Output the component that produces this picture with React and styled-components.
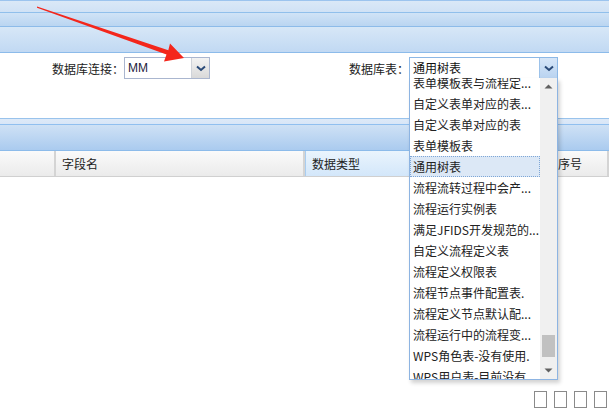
import React from 'react'
import styled, { createGlobalStyle } from 'styled-components'

const Global = createGlobalStyle`
  html, body { margin: 0; padding: 0; background: #fff; }
  body {
    font-family: "Microsoft YaHei", "Noto Sans CJK SC", "Liberation Sans", sans-serif;
    font-size: 12px;
    color: #1a1a1a;
  }
`;

const Page = styled.div`
  position: relative;
  width: 609px;
  height: 412px;
  overflow: hidden;
  display: flex;
  flex-direction: column;
  border-top: 1px solid #9cc4ee;
  box-sizing: border-box;
`;

const Band = styled.div`
  height: ${p => p.$h}px;
  flex: none;
  background: linear-gradient(to bottom, ${p => p.$from}, ${p => p.$to});
  border-bottom: 1px solid ${p => p.$line || '#8dbbe9'};
  border-top: ${p => (p.$top ? `1px solid ${p.$top}` : 'none')};
`;

const Form = styled.div`
  height: 65px;
  flex: none;
  display: flex;
  align-items: flex-start;
  padding: 4px 0 0 52px;
  box-sizing: border-box;
`;

const Field = styled.div`
  display: flex;
  align-items: center;
  margin-left: ${p => p.$gap || 0}px;
`;

const Label = styled.span`
  width: ${p => p.$w}px;
  white-space: nowrap;
  color: #222;
`;

const Combo = styled.div`
  position: relative;
  width: ${p => p.$w}px;
  height: 22px;
  box-sizing: border-box;
  display: flex;
  border: 1px solid ${p => (p.$active ? '#8cb8e6' : '#aab6cf')};
  background: #fff;
`;

const ComboText = styled.div`
  flex: 1;
  padding-left: 3px;
  line-height: 20px;
  font-family: ${p => (p.$latin ? '"Liberation Sans", sans-serif' : 'inherit')};
  color: ${p => (p.$latin ? '#1c1c3c' : '#111')};
`;

const ComboButton = styled.div`
  width: 17px;
  display: flex;
  align-items: center;
  justify-content: center;
  border-left: 1px solid ${p => (p.$active ? '#9cc2ea' : '#cfd3da')};
  background: ${p =>
    p.$active
      ? 'linear-gradient(to bottom, #d6e6f8, #b9d3f0)'
      : 'linear-gradient(to bottom, #f3f3f3, #d9d9d9)'};
`;

const List = styled.div`
  position: absolute;
  top: 100%;
  left: -1px;
  right: -1px;
  height: 302px;
  box-sizing: border-box;
  display: flex;
  background: #fff;
  border: 1px solid #8db4e2;
  border-top: none;
  box-shadow: 2px 3px 4px rgba(0, 0, 0, 0.18);
  z-index: 5;
`;

const Items = styled.div`
  flex: 1;
  overflow: hidden;
`;

const ItemsInner = styled.div`
  margin-top: -6px;
`;

const Item = styled.div`
  height: 21px;
  line-height: 19px;
  padding-left: 2px;
  white-space: nowrap;
  overflow: hidden;
  box-sizing: border-box;
  color: #222;
  background: ${p => (p.$selected ? '#dce8f6' : 'transparent')};
  border: 1px dotted ${p => (p.$selected ? '#7ea6d6' : 'transparent')};
`;

const Scroll = styled.div`
  width: 17px;
  display: flex;
  flex-direction: column;
  background: #f0f0f0;
`;

const ScrollArrow = styled.div`
  height: 17px;
  display: flex;
  align-items: center;
  justify-content: center;
`;

const Track = styled.div`
  flex: 1;
  position: relative;
`;

const Thumb = styled.div`
  position: absolute;
  left: 2px;
  width: 13px;
  height: 22px;
  background: #c1c1c1;
`;

const Header = styled.div`
  height: 26px;
  flex: none;
  display: flex;
  box-sizing: border-box;
  border-bottom: 1px solid #d0d0d0;
  background: linear-gradient(to bottom, #fafafa, #ebebeb);
`;

const HeadCell = styled.div`
  width: ${p => (p.$w ? `${p.$w}px` : 'auto')};
  flex: ${p => (p.$w ? 'none' : 1)};
  box-sizing: border-box;
  padding-left: ${p => p.$pad || 6}px;
  line-height: 25px;
  white-space: nowrap;
  border-right: 2px solid #d4d4d4;
  background: ${p => (p.$hot ? 'linear-gradient(to bottom, #eaf4fd, #d3e7fa)' : 'transparent')};
  border-left: ${p => (p.$hot ? '1px solid #a9cdf0' : 'none')};
  color: #222;
`;

const Body = styled.div`
  flex: 1;
  display: flex;
  align-items: flex-end;
  justify-content: flex-end;
  padding: 0 2px 4px 0;
`;

const Tofus = styled.div`
  display: flex;
  gap: 7px;
`;

const Tofu = styled.span`
  width: 13px;
  height: 17px;
  box-sizing: border-box;
  border: 1.5px solid #8a8a8a;
`;

const Overlay = styled.svg`
  position: absolute;
  left: 0;
  top: 0;
  pointer-events: none;
  z-index: 10;
`;

const Chevron = () => (
  <svg width="10" height="7" viewBox="0 0 10 7">
    <path d="M1 1.5 L5 5 L9 1.5" fill="none" stroke="#2a4a78" strokeWidth="2" />
  </svg>
);

const Tri = ({ up }) => (
  <svg width="9" height="5" viewBox="0 0 9 5">
    <path d={up ? 'M0.5 4.5 L4.5 0.5 L8.5 4.5 Z' : 'M0.5 0.5 L8.5 0.5 L4.5 4.5 Z'} fill="#606060" />
  </svg>
);

const tables = [
  '表单模板表与流程定...',
  '自定义表单对应的表...',
  '自定义表单对应的表',
  '表单模板表',
  '通用树表',
  '流程流转过程中会产...',
  '流程运行实例表',
  '满足JFIDS开发规范的...',
  '自定义流程定义表',
  '流程定义权限表',
  '流程节点事件配置表.',
  '流程定义节点默认配...',
  '流程运行中的流程变...',
  'WPS角色表-没有使用.',
  'WPS用户表-目前没有...',
];

export default function App() {
  return (
    <>
      <Global />
      <Page>
        <Band $h={11} $from="#dae8f7" $to="#d0e2f5" $line="#90bfeb" />
        <Band $h={13} $from="#d0e3f6" $to="#bad5f1" $line="#8dbbe9" />
        <Band $h={25} $from="#d7e7f7" $to="#c1d9f3" $line="#8cbbea" />
        <Form>
          <Field>
            <Label $w={72}>数据库连接：</Label>
            <Combo $w={86}>
              <ComboText $latin>MM</ComboText>
              <ComboButton><Chevron /></ComboButton>
            </Combo>
          </Field>
          <Field $gap={139}>
            <Label $w={60}>数据库表：</Label>
            <Combo $w={149} $active>
              <ComboText>通用树表</ComboText>
              <ComboButton $active><Chevron /></ComboButton>
              <List>
                <Items>
                  <ItemsInner>
                    {tables.map(t => (
                      <Item key={t} $selected={t === '通用树表'}>{t}</Item>
                    ))}
                  </ItemsInner>
                </Items>
                <Scroll>
                  <ScrollArrow><Tri up /></ScrollArrow>
                  <Track>
                    <Thumb style={{ top: 240 }} />
                  </Track>
                  <ScrollArrow><Tri /></ScrollArrow>
                </Scroll>
              </List>
            </Combo>
          </Field>
        </Form>
        <Band $h={5} $from="#dde9f8" $to="#d8e6f7" $top="#99c3ec" $line="#90bfef" />
        <Band $h={25} $from="#cfe1f5" $to="#aacbef" $line="#8cbbea" />
        <Header>
          <HeadCell $w={56} />
          <HeadCell $w={249}>字段名</HeadCell>
          <HeadCell $w={233} $hot>数据类型</HeadCell>
          <HeadCell $pad={8}>排序号</HeadCell>
        </Header>
        <Body>
          <Tofus>
            <Tofu />
            <Tofu />
            <Tofu />
            <Tofu />
          </Tofus>
        </Body>
        <Overlay width="609" height="412" viewBox="0 0 609 412">
          <polygon
            points="37,5.4 168.3,49.3 170,42.5 184,57 164,60.5 166.5,53.5 37,6.8"
            fill="#f4261b"
          />
        </Overlay>
      </Page>
    </>
  );
}
